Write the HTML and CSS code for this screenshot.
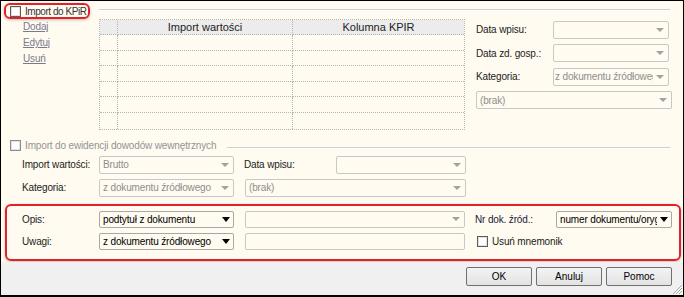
FILE: index.html
```html
<!DOCTYPE html>
<html lang="pl">
  <head>
    <meta charset="UTF-8" />
    <meta name="viewport" content="width=device-width, initial-scale=1.0" />
    <title>Import</title>
    <link rel="stylesheet" href="styles.css">
  </head>

  <body>
    <div class="window">
      <div class="main">
        <div class="head">
          <label class="check mark"><span class="box"></span>Import do KPiR</label>
          <div class="rule"></div>
        </div>

        <div class="kpir">
          <div class="links">
            <a href="#">Dodaj</a>
            <a href="#">Edytuj</a>
            <a href="#">Usuń</a>
          </div>
          <div class="grid">
            <div class="cell th"></div><div class="cell th">Import wartości</div><div class="cell th">Kolumna KPIR</div>
            <div class="cell"></div><div class="cell"></div><div class="cell"></div>
            <div class="cell"></div><div class="cell"></div><div class="cell"></div>
            <div class="cell"></div><div class="cell"></div><div class="cell"></div>
            <div class="cell"></div><div class="cell"></div><div class="cell"></div>
            <div class="cell"></div><div class="cell"></div><div class="cell"></div>
            <div class="cell"></div><div class="cell"></div><div class="cell"></div>
          </div>
          <div class="side">
            <div class="row"><span class="lbl side-lbl">Data wpisu:</span><div class="select w116"><span class="val"></span></div></div>
            <div class="row"><span class="lbl side-lbl">Data zd. gosp.:</span><div class="select w116"><span class="val"></span></div></div>
            <div class="row"><span class="lbl side-lbl">Kategoria:</span><div class="select w116 tight"><span class="val">z dokumentu źródłowego</span></div></div>
            <div class="row"><div class="select w196"><span class="val">(brak)</span></div></div>
          </div>
        </div>

        <div class="head second">
          <label class="check off"><span class="box"></span>Import do ewidencji dowodów wewnętrznych</label>
          <div class="rule"></div>
        </div>

        <div class="form">
          <div class="row">
            <span class="lbl">Import wartości:</span>
            <div class="select w135"><span class="val">Brutto</span></div>
            <span class="lbl mid-lbl">Data wpisu:</span>
            <div class="select w130"><span class="val"></span></div>
          </div>
          <div class="row">
            <span class="lbl">Kategoria:</span>
            <div class="select w135"><span class="val">z dokumentu źródłowego</span></div>
            <div class="select w221 gap11"><span class="val">(brak)</span></div>
          </div>
        </div>

        <div class="mark-box">
          <div class="row">
            <span class="lbl">Opis:</span>
            <div class="select on w135"><span class="val">podtytuł z dokumentu</span></div>
            <div class="select w220 gap11"><span class="val"></span></div>
            <span class="lbl nr-lbl">Nr dok. źród.:</span>
            <div class="select on w116"><span class="val">numer dokumentu/oryginału</span></div>
          </div>
          <div class="row">
            <span class="lbl">Uwagi:</span>
            <div class="select on w135"><span class="val">z dokumentu źródłowego</span></div>
            <div class="field w220 gap11"></div>
            <label class="check opt"><span class="box"></span>Usuń mnemonik</label>
          </div>
        </div>
      </div>

      <div class="footer">
        <button>OK</button>
        <button>Anuluj</button>
        <button>Pomoc</button>
        <svg class="grip" width="12" height="12" viewBox="0 0 12 12">
          <path d="M11 2 L2 11 M11 5 L5 11 M11 8 L8 11" stroke="#a8a8a8" stroke-width="1" />
          <path d="M12 3 L3 12 M12 6 L6 12 M12 9 L9 12" stroke="#ffffff" stroke-width="1" />
        </svg>
      </div>
    </div>
  </body>
</html>
```

FILE: styles.css
```css
* {
  box-sizing: border-box;
}

body {
  margin: 0;
  font-family: "Liberation Sans", Arial, sans-serif;
  font-size: 10px;
  letter-spacing: -0.15px;
  color: #1c1c1c;
}

.window {
  width: 684px;
  height: 297px;
  border: 1px solid #000;
  border-bottom-width: 2px;
  background: #fffbf0;
  display: flex;
  flex-direction: column;
}
.main {
  flex: 1;
  display: flex;
  flex-direction: column;
}

/* group headers */
.head {
  display: flex;
  align-items: center;
}
.head .rule {
  flex: 1;
  margin: 0 13px 0 9px;
  border-top: 1px solid #cfcfcf;
  border-bottom: 1px solid #fff;
}
.head.second {
  margin-top: 9px;
  height: 14px;
  padding-left: 9px;
}
.head.second .rule {
  margin: 4px 13px 0 11px;
}

.check {
  display: flex;
  align-items: center;
  white-space: nowrap;
  color: #333;
}
.check .box {
  width: 11px;
  height: 11px;
  margin-right: 4px;
  border: 1px solid #5c5c5c;
  background: #fff;
  box-shadow: inset 0 0 0 1px #e2e2e2;
}
.check.off {
  color: #949494;
}
.check.off .box {
  border-color: #8c8c8c;
}
.mark {
  width: 86px;
  height: 16px;
  margin: 2px 0 0 3px;
  padding-left: 4px;
  border: 2px solid #e4212a;
  border-radius: 6px;
  box-shadow: 0 1px 3px rgba(0, 0, 0, 0.25);
  letter-spacing: -0.45px;
}

/* KPIR section */
.kpir {
  display: flex;
}
.links {
  width: 98px;
  padding-left: 22px;
  display: flex;
  flex-direction: column;
  align-items: flex-start;
}
.links a {
  line-height: 16px;
  color: #7a7a8e;
}
.grid {
  width: 366px;
  display: grid;
  grid-template-columns: 18px 175px 1fr;
  grid-template-rows: 15px repeat(6, 15.6px);
  border: 1px dotted #b4b4b4;
}
.cell {
  border-right: 1px dotted #b4b4b4;
  border-bottom: 1px dotted #b4b4b4;
}
.cell:nth-child(3n) {
  border-right: none;
}
.cell:nth-last-child(-n + 3) {
  border-bottom: none;
}
.cell.th {
  background: #ececec;
  text-align: center;
  font-size: 11px;
  letter-spacing: 0;
  line-height: 14px;
  color: #222;
}
.side {
  margin-left: 11px;
  padding-top: 1.5px;
  display: flex;
  flex-direction: column;
  gap: 5.5px;
}
.side-lbl {
  width: 80px;
}

/* rows, selects */
.row {
  display: flex;
  align-items: center;
  height: 18px;
}
.lbl {
  flex: none;
  width: 77px;
  white-space: nowrap;
}
.mid-lbl {
  width: 92px;
  margin-left: 10px;
}
.nr-lbl {
  width: 81px;
  margin-left: 10px;
  color: #1a1a3a;
}
.select {
  flex: none;
  display: flex;
  align-items: center;
  height: 100%;
  padding-left: 3px;
  border: 1px solid #c8c8c8;
  border-radius: 2px;
  color: #8e8e8e;
}
.select.tight {
  padding-left: 1px;
}
.select .val {
  flex: 1;
  min-width: 0;
  overflow: hidden;
  white-space: nowrap;
}
.select::after {
  content: "";
  flex: none;
  margin: 0 4px 0 3px;
  border-left: 4px solid transparent;
  border-right: 4px solid transparent;
  border-top: 4px solid #a2a2a2;
}
.select.on {
  border-color: #a8a8a8;
  color: #000;
}
.select.on::after {
  margin-right: 3px;
  border-left-width: 4.5px;
  border-right-width: 4.5px;
  border-top: 5px solid #000;
}
.field {
  flex: none;
  height: 100%;
  border: 1px solid #c8c8c8;
  border-radius: 2px;
}
.gap11 {
  margin-left: 11px;
}
.w116 { width: 116px; }
.w130 { width: 130px; }
.w135 { width: 135px; }
.w196 { width: 196px; }
.w220 { width: 220px; }
.w221 { width: 221px; }

.form {
  margin-top: 3px;
  padding-left: 21px;
  display: flex;
  flex-direction: column;
  gap: 5px;
}

.mark-box {
  margin: 7px 2px 0 4px;
  padding: 5px 0 9px 15px;
  border: 2px solid #e4212a;
  border-radius: 6px;
  box-shadow: 0 1px 3px rgba(0, 0, 0, 0.25);
  display: flex;
  flex-direction: column;
  gap: 5px;
}
.mark-box .row {
  height: 17px;
}
.check.opt {
  margin-left: 12px;
  color: #1c1c1c;
}

/* footer */
.footer {
  position: relative;
  height: 33px;
  background: #f0f0f0;
  display: flex;
  justify-content: flex-end;
  align-items: flex-start;
  gap: 4px;
  padding: 5px 11px 0 0;
}
.footer button {
  width: 66px;
  height: 19px;
  padding: 0;
  border: 1px solid #707070;
  border-radius: 2px;
  background: linear-gradient(#f3f3f3, #e3e3e3);
  font-family: "Liberation Sans", Arial, sans-serif;
  font-size: 10px;
  color: #000;
}
.grip {
  position: absolute;
  right: 0;
  bottom: 0;
}
```
